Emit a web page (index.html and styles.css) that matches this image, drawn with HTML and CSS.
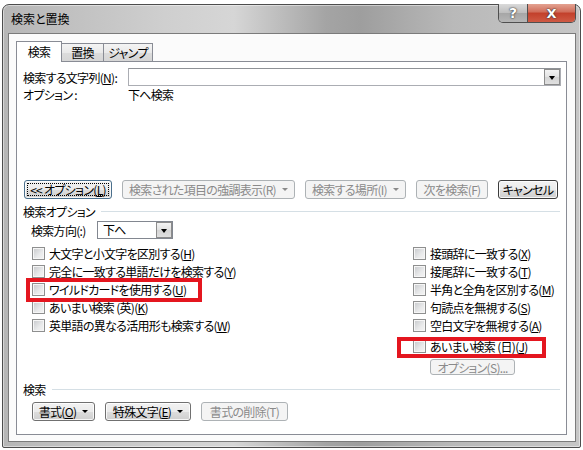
FILE: index.html
```html
<!DOCTYPE html>
<html lang="ja">

<head>
    <meta charset="UTF-8">
    <title>検索と置換</title>
    <link rel="stylesheet" href="styles.css">
</head>

<body>
    <div class="window">
        <div class="titlebar">
            <span class="title">検索と置換</span>
            <div class="caption-btns">
                <span class="help-btn">?</span>
                <span class="close-btn">X</span>
            </div>
        </div>

        <div class="client">
            <div class="tabs">
                <div class="tab active">検索</div>
                <div class="tab">置換</div>
                <div class="tab">ジャンプ</div>
            </div>

            <div class="panel">
                <div class="find-row">
                    <span class="find-label">検索する文字列(<u>N</u>):</span>
                    <div class="combo">
                        <span class="drop"></span>
                    </div>
                </div>
                <div class="opt-row">
                    <span class="find-label">オプション :</span>
                    <span>下へ検索</span>
                </div>

                <div class="btn-row">
                    <button class="btn focused" style="width: 88px;">&lt;&lt; オプション(<u>L</u>)</button>
                    <button class="btn disabled" style="width: 173px;">検索された項目の強調表示(R)<span class="caret"></span></button>
                    <button class="btn disabled" style="width: 101px;">検索する場所(I)<span class="caret"></span></button>
                    <button class="btn disabled" style="width: 72px;">次を検索(F)</button>
                    <button class="btn default" style="width: 60px;">キャンセル</button>
                </div>

                <div class="section">
                    <span>検索オプション</span>
                    <span class="rule"></span>
                </div>

                <div class="dir-row">
                    <span class="dir-label">検索方向(:)</span>
                    <div class="select">
                        <span>下へ</span>
                        <span class="drop"></span>
                    </div>
                </div>

                <div class="checks">
                    <div class="check-col left-col">
                        <div class="check"><span class="box"></span>大文字と小文字を区別する(<u>H</u>)</div>
                        <div class="check"><span class="box"></span>完全に一致する単語だけを検索する(<u>Y</u>)</div>
                        <div class="check"><span class="box"></span>ワイルドカードを使用する(<u>U</u>)</div>
                        <div class="check"><span class="box"></span>あいまい検索 (英)(<u>K</u>)</div>
                        <div class="check"><span class="box"></span>英単語の異なる活用形も検索する(<u>W</u>)</div>
                    </div>
                    <div class="check-col right-col">
                        <div class="check"><span class="box"></span>接頭辞に一致する(<u>X</u>)</div>
                        <div class="check"><span class="box"></span>接尾辞に一致する(<u>T</u>)</div>
                        <div class="check"><span class="box"></span>半角と全角を区別する(<u>M</u>)</div>
                        <div class="check"><span class="box"></span>句読点を無視する(<u>S</u>)</div>
                        <div class="check"><span class="box"></span>空白文字を無視する(<u>A</u>)</div>
                        <div class="check fuzzy"><span class="box"></span>あいまい検索 (日)(<u>J</u>)</div>
                        <button class="btn disabled small">オプション(S)...</button>
                    </div>
                </div>

                <div class="section bottom-section">
                    <span>検索</span>
                    <span class="rule"></span>
                </div>

                <div class="btn-row bottom-row">
                    <button class="btn" style="width: 63px;">書式(<u>O</u>)<span class="caret"></span></button>
                    <button class="btn" style="width: 86px;">特殊文字(<u>E</u>)<span class="caret"></span></button>
                    <button class="btn disabled" style="width: 87px;">書式の削除(T)</button>
                </div>
            </div>
        </div>

        <!-- annotation boxes -->
        <div class="mark mark-left"></div>
        <div class="mark mark-right"></div>
    </div>
</body>

</html>
```

FILE: styles.css
```css
* {
    margin: 0;
    padding: 0;
    box-sizing: border-box;
}

body {
    font-family: "Noto Sans CJK JP", "Noto Sans", sans-serif;
    font-size: 12px;
    font-feature-settings: "palt";
    letter-spacing: -0.7px;
    color: #000;
    background-color: #fff;
}

u {
    text-decoration: underline;
    text-underline-offset: 1px;
}

/* Window frame */
.window {
    position: relative;
    margin: 4px 0 0 2px;
    width: 579px;
    height: 444px;
    border: 1px solid #4d4d4d;
    border-radius: 7px 7px 2px 2px;
    background: linear-gradient(90deg, #b6b6b6, #cfcfcf 28%, #d6d6d6 40%, #a4a4a4 56%, #9e9e9e 62%, #b9b9b9 78%, #c6c6c6);
    box-shadow: inset 0 0 0 1px rgba(255, 255, 255, 0.45);
    display: flex;
    flex-direction: column;
}

.titlebar {
    height: 28px;
    display: flex;
    align-items: flex-start;
    padding-left: 8px;
}

.title {
    line-height: 27px;
    letter-spacing: 0;
}

.caption-btns {
    margin-left: auto;
    margin-right: 4px;
    margin-top: -1px;
    display: flex;
    height: 19px;
    border: 1px solid #4f4f4f;
    border-top: none;
    border-radius: 0 0 5px 5px;
    overflow: hidden;
}

.help-btn,
.close-btn {
    display: flex;
    justify-content: center;
    align-items: center;
    color: #fff;
    font-family: "DejaVu Sans", sans-serif;
    font-weight: bold;
    letter-spacing: 0;
    text-shadow: 0 0 2px #333, 0 0 1px #222;
}

.help-btn {
    width: 29px;
    font-size: 14px;
    background: linear-gradient(#dadada, #bdbdbd 50%, #a6a6a6 51%, #b6b6b6);
    border-right: 1px solid #4f4f4f;
}

.close-btn {
    width: 47px;
    font-size: 13px;
    background: linear-gradient(#e3a291, #d06c59 45%, #c2402b 50%, #cf5a44);
}

/* Client area */
.client {
    margin: 0 4px 0 5px;
    height: 409px;
    border: 1px solid #7b7b7b;
    background-color: #fbfbfb;
    padding: 7px 0 0 7px;
}

.tabs {
    display: flex;
    align-items: flex-end;
    height: 20px;
}

.tab {
    height: 18px;
    border: 1px solid #898c95;
    border-bottom: none;
    background: linear-gradient(#f4f4f4, #e9e9e9 50%, #dcdcdc 51%, #d6d6d6);
    display: flex;
    justify-content: center;
    align-items: center;
    white-space: nowrap;
    margin-left: -1px;
}

.tab:first-child {
    margin-left: 0;
}

.tab.active {
    position: relative;
    z-index: 1;
    height: 21px;
    margin-bottom: -1px;
    width: 46px;
    background: #fff;
    padding-bottom: 2px;
}

.tab:nth-child(2) {
    width: 43px;
}

.tab:nth-child(3) {
    width: 50px;
}

.panel {
    width: 551px;
    height: 374px;
    border: 1px solid #898c95;
    background-color: #fff;
    padding: 6px 5px 0 6px;
}

.find-row {
    display: flex;
    align-items: center;
    height: 18px;
}

.find-label {
    width: 105px;
}

.combo {
    position: relative;
    width: 434px;
    height: 18px;
    border: 1px solid #abadb3;
    border-top-color: #8f9297;
    background-color: #fff;
}

.drop {
    position: absolute;
    right: 0;
    top: 0;
    width: 16px;
    height: 16px;
    border: 1px solid #8c8c8c;
    background: linear-gradient(#f3f3f3, #e2e2e2 50%, #d4d4d4 51%, #e0e0e0);
}

.drop::after {
    content: "";
    position: absolute;
    left: 4px;
    top: 6px;
    border-left: 3.5px solid transparent;
    border-right: 3.5px solid transparent;
    border-top: 4px solid #000;
}

.opt-row {
    display: flex;
    align-items: center;
    height: 14px;
    margin-top: 1px;
}

/* Buttons */
.btn-row {
    display: flex;
    gap: 10px;
    margin-top: 79px;
    padding-left: 1px;
    height: 19px;
}

.btn {
    height: 19px;
    border: 1px solid #707070;
    border-radius: 3px;
    background: linear-gradient(#f2f2f2, #ebebeb 50%, #dddddd 51%, #cfcfcf);
    box-shadow: inset 0 0 0 1px rgba(255, 255, 255, 0.8);
    font-family: inherit;
    font-size: 12px;
    font-feature-settings: "palt";
    letter-spacing: -0.7px;
    color: #000;
    display: flex;
    justify-content: center;
    align-items: center;
    white-space: nowrap;
}

.btn.focused {
    outline: 1px dotted #000;
    outline-offset: -4px;
    border-color: #4a6f8c;
}

.btn.default {
    border-color: #3c3c3c;
}

.btn.disabled {
    border-color: #adb2b5;
    background: #f4f4f4;
    color: #8a8a8a;
    box-shadow: none;
}

.caret {
    margin-left: 6px;
    border-left: 3px solid transparent;
    border-right: 3px solid transparent;
    border-top: 3px solid currentColor;
}

/* Sections */
.section {
    display: flex;
    align-items: center;
    height: 14px;
    margin-top: 5px;
}

.rule {
    flex: 1;
    height: 1px;
    margin: 1px 1px 0 6px;
    background-color: #d5dfe5;
}

.dir-row {
    display: flex;
    align-items: center;
    height: 18px;
    margin-top: 3px;
    padding-left: 8px;
}

.dir-label {
    width: 66px;
}

.select {
    position: relative;
    width: 76px;
    height: 18px;
    border: 1px solid #828790;
    padding-left: 5px;
    line-height: 15px;
}

/* Checkboxes */
.checks {
    display: flex;
    margin-top: 5px;
    height: 131px;
}

.check-col {
    display: flex;
    flex-direction: column;
}

.left-col {
    width: 390px;
    padding-left: 9px;
}

.check {
    display: flex;
    align-items: center;
    height: 18px;
    white-space: nowrap;
}

.check.fuzzy {
    margin-top: 3px;
}

.box {
    width: 13px;
    height: 13px;
    margin-right: 4px;
    border: 1px solid #8e8f8f;
    background: linear-gradient(135deg, #c6c8cb, #e9eaeb 60%, #f4f4f4);
    box-shadow: inset 0 0 0 1px #f6f6f6;
}

.btn.small {
    margin-top: 4px;
    margin-left: 17px;
    width: 85px;
    height: 16px;
}

.bottom-section {
    margin-top: 7px;
}

.bottom-row {
    margin-top: 6px;
    padding-left: 9px;
}

/* Red annotation boxes */
.mark {
    position: absolute;
    border: 4px solid #e4161f;
    z-index: 5;
}

.mark-left {
    left: 23px;
    top: 273px;
    width: 176px;
    height: 24px;
}

.mark-right {
    left: 394px;
    top: 332px;
    width: 149px;
    height: 21px;
}
```
